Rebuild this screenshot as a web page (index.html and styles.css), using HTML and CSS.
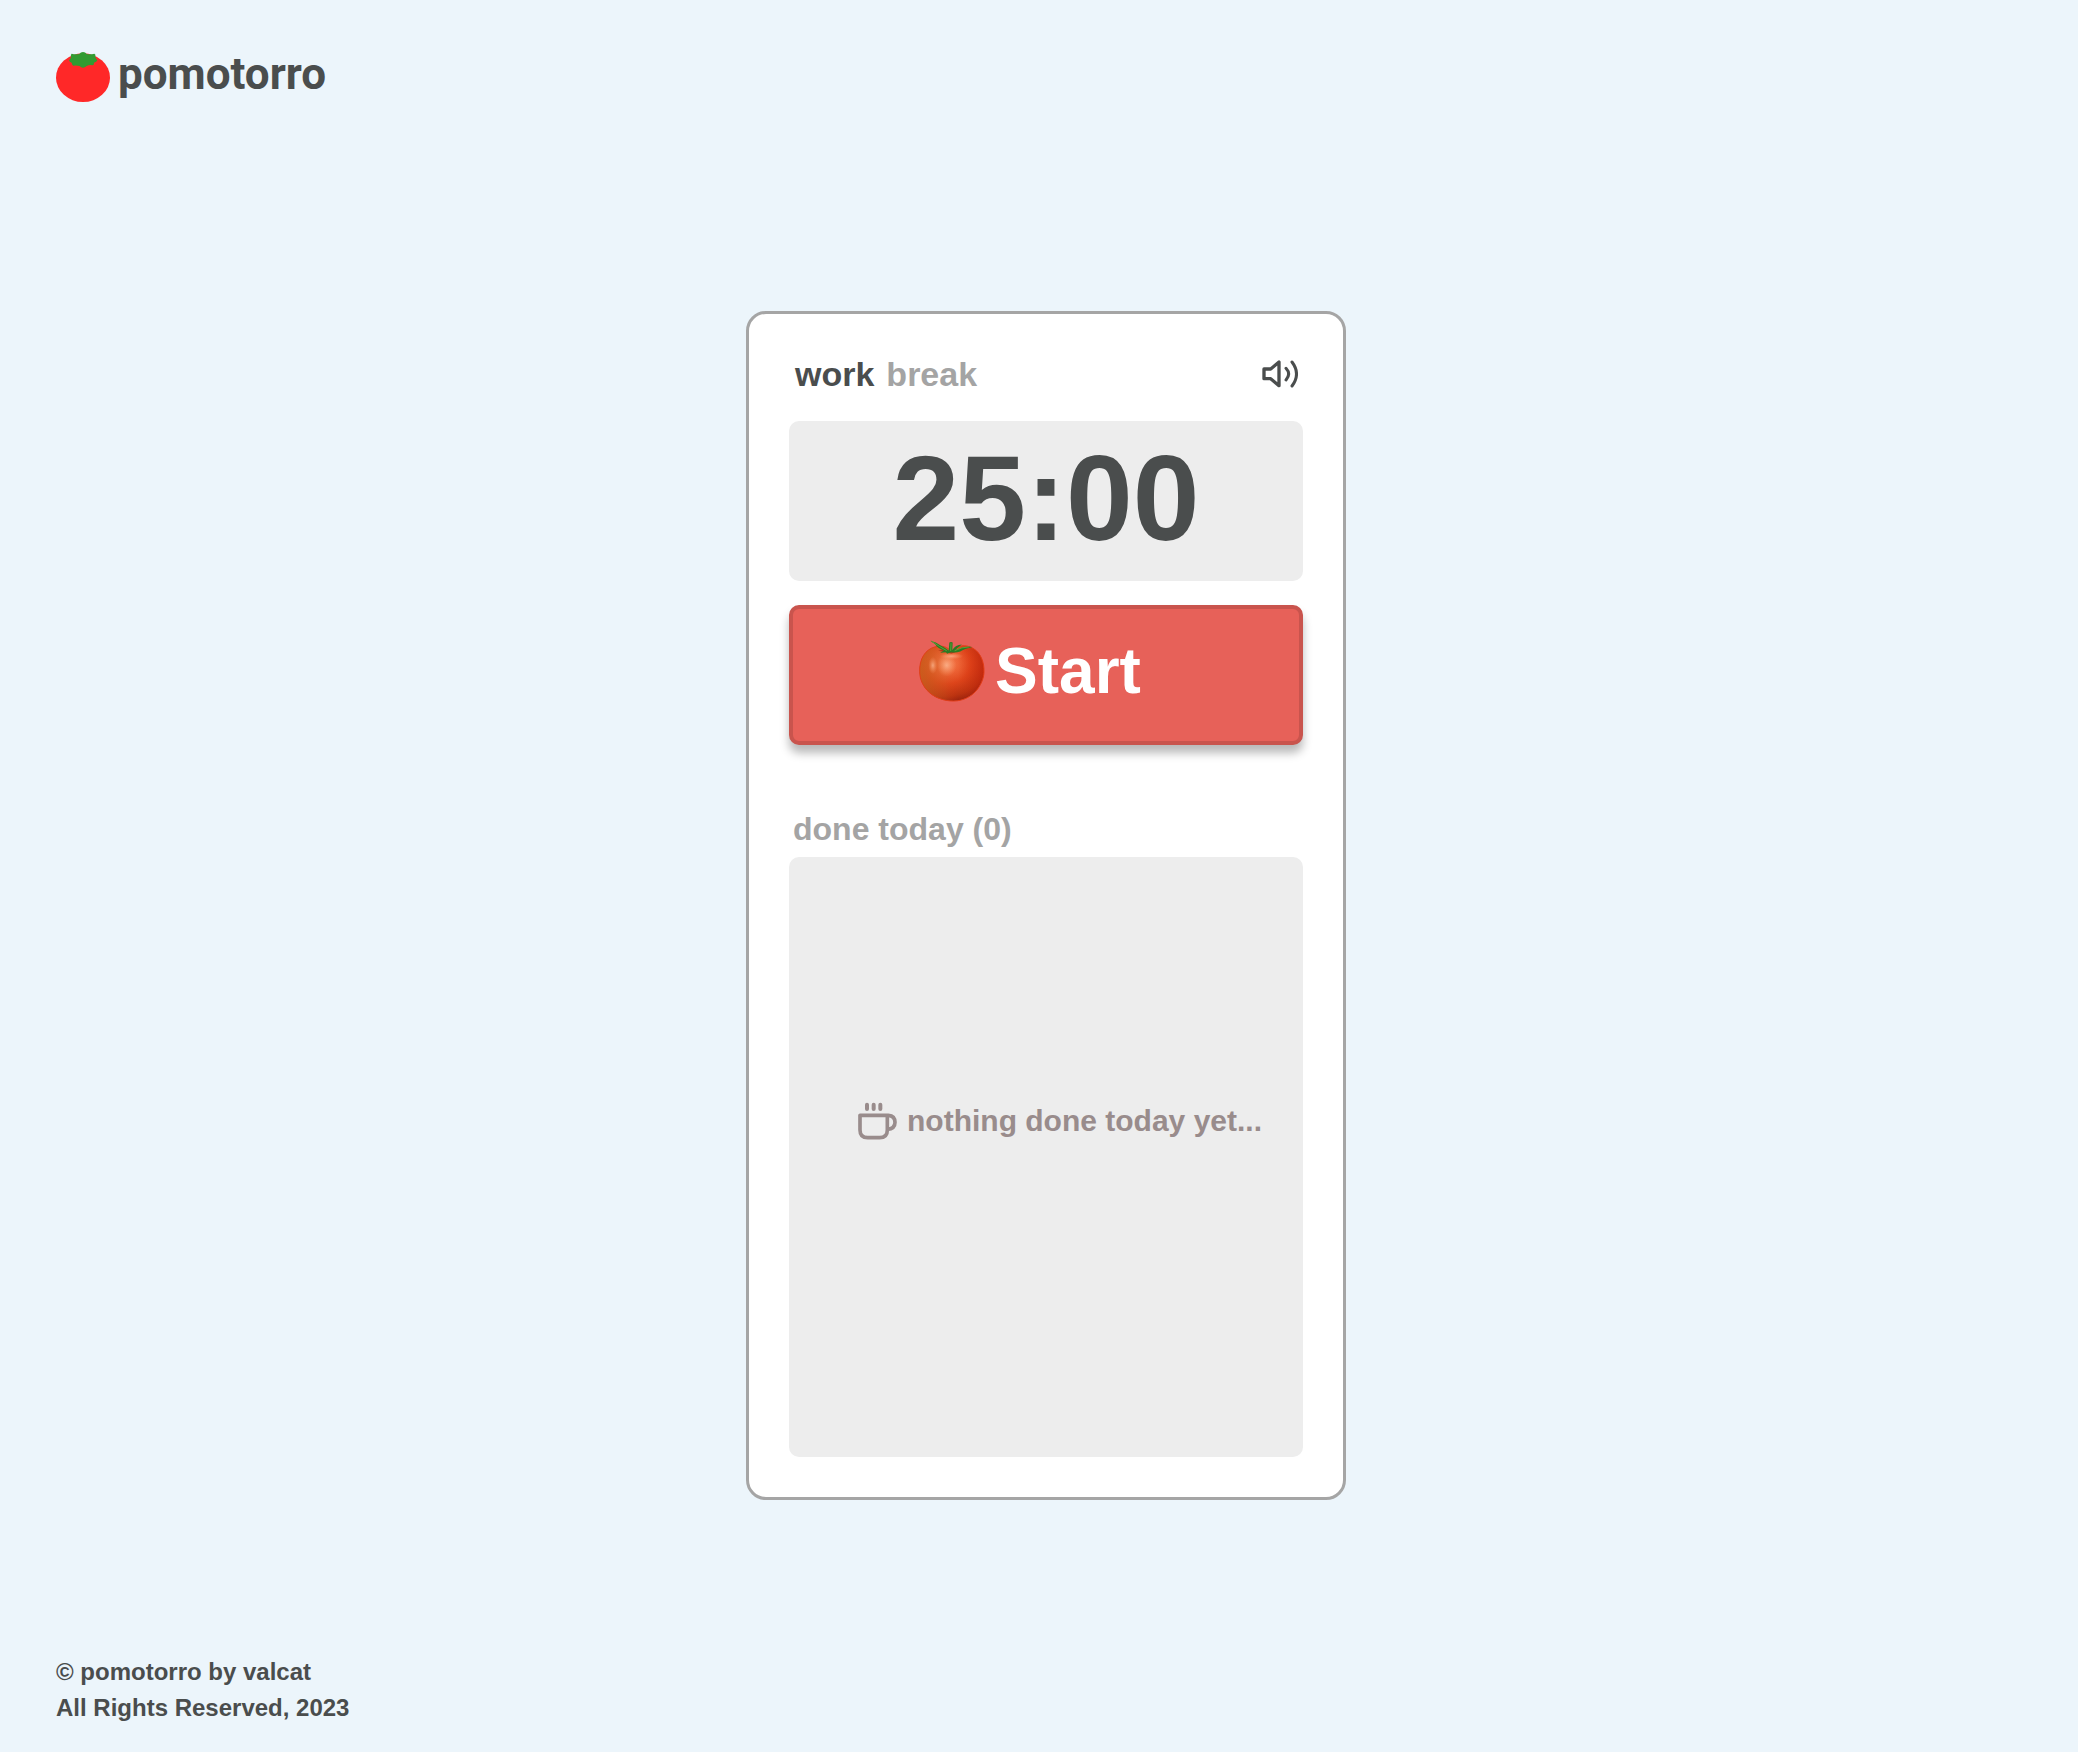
FILE: index.html
```html
<!DOCTYPE html>
<html lang="en">
<head>
<meta charset="utf-8">
<meta name="viewport" content="width=device-width, initial-scale=1">
<title>pomotorro</title>
<link rel="stylesheet" href="styles.css">
</head>
<body>
<header class="site-header">
  <a class="brand" href="#">
    <svg class="brand-mark" viewBox="0 0 162 150" aria-hidden="true">
      <ellipse cx="81" cy="77" rx="81" ry="73" fill="#ff2828"/>
      <path fill="#319b31" d="M47 5Q58 8 70 6Q74 0 81 0Q88 0 92 6Q103 8 115 5Q120 6 118 14Q120 20 124 25Q122 31 114 32Q115 38 110 40Q100 38 92 42Q86 47 81 47Q75 47 71 42Q61 39 52 41Q48 39 47 32Q40 31 39 25Q44 20 45 14Q43 8 47 5Z"/>
    </svg>
    <span class="brand-name">pomotorro</span>
  </a>
</header>
<main class="stage">
  <section class="card">
    <div class="card-top">
      <nav class="modes">
        <button type="button" class="mode mode-active">work</button>
        <button type="button" class="mode">break</button>
      </nav>
      <button type="button" class="sound" aria-label="Sound">
        <svg class="sound-icon" viewBox="0 0 108 84" fill="none" stroke="#4a4d4d" stroke-linecap="round" stroke-linejoin="round" aria-hidden="true">
          <path stroke-width="10" d="M6 27H26L51 6V77L26 56H6Z"/>
          <path stroke-width="9" d="M72 25Q88 42 72 60M90 6Q117 42 90 78"/>
        </svg>
      </button>
    </div>
    <div class="timer" role="timer">25:00</div>
    <button type="button" class="start">
      <svg class="start-icon" viewBox="0 0 200 186" aria-hidden="true">
        <defs>
          <radialGradient id="flesh" cx="0.42" cy="0.32" r="0.74">
            <stop offset="0" stop-color="#f98a5c"/>
            <stop offset="0.24" stop-color="#ee6638"/>
            <stop offset="0.5" stop-color="#dd451b"/>
            <stop offset="0.8" stop-color="#b93210"/>
            <stop offset="1" stop-color="#8d1d0d"/>
          </radialGradient>
          <linearGradient id="side" x1="0" x2="1" y1="0" y2="0">
            <stop offset="0" stop-color="#c8661f" stop-opacity="0.75"/>
            <stop offset="0.4" stop-color="#cf5c20" stop-opacity="0.25"/>
            <stop offset="0.6" stop-color="#e2330f" stop-opacity="0"/>
            <stop offset="1" stop-color="#d01c0a" stop-opacity="0.4"/>
          </linearGradient>
          <radialGradient id="glow">
            <stop offset="0" stop-color="#ffc09c" stop-opacity="0.7"/>
            <stop offset="1" stop-color="#ffa070" stop-opacity="0"/>
          </radialGradient>
        </defs>
        <path fill="url(#flesh)" d="M97 35C112 14 143 11 165 25C188 39 198 68 197 97C195 134 164 183 105 184C45 184 3 145 2 95C1 57 18 28 48 20C70 14 88 20 97 35Z"/>
        <path fill="url(#side)" stroke="#e23e17" stroke-width="3" d="M97 35C112 14 143 11 165 25C188 39 198 68 197 97C195 134 164 183 105 184C45 184 3 145 2 95C1 57 18 28 48 20C70 14 88 20 97 35Z"/>
        <path fill="#8d1f0c" opacity="0.6" d="M58 31Q75 27 96 34Q112 25 132 27Q112 35 98 41Q80 37 58 31Z"/>
        <ellipse fill="url(#glow)" cx="84" cy="76" rx="30" ry="34"/>
        <ellipse fill="url(#glow)" cx="42" cy="76" rx="14" ry="26"/>
        <ellipse fill="url(#glow)" cx="98" cy="48" rx="36" ry="10"/>
        <path fill="#2c7a24" d="M34 1Q52 4 66 16Q78 22 90 31L92 7Q97 3 102 7L101 30Q110 14 130 13Q116 22 109 32Q130 18 162 20Q137 25 125 34Q111 39 97 36L85 41L82 36L64 38L76 31Q55 23 49 12Z"/>
        <path fill="none" stroke="#5ba136" stroke-width="3" stroke-linecap="round" d="M39 3Q64 21 83 31M97 10L96 31M109 31Q130 20 151 20"/>
      </svg>
      <span>Start</span>
    </button>
    <h2 class="done-title">done today (0)</h2>
    <div class="done-list">
      <svg class="cup-icon" viewBox="0 0 117 114" fill="none" stroke="#998c8c" stroke-linecap="round" stroke-linejoin="round" aria-hidden="true">
        <path stroke-width="11" d="M6 40H88V84Q88 107 65 107H29Q6 107 6 84ZM88 40H91Q111 42 111 61Q111 81 88 82"/>
        <path stroke-width="12" d="M27 8V21M47 8V21M67 8V21"/>
      </svg>
      <p class="empty-note">nothing done today yet...</p>
    </div>
  </section>
</main>
<footer class="site-footer">
  <p>© pomotorro by valcat</p>
  <p>All Rights Reserved, 2023</p>
</footer>
</body>
</html>
```

FILE: styles.css
```css
* {
  box-sizing: border-box;
}

body {
  margin: 0;
  min-height: 100vh;
  padding: 52px 42px 26px 56px;
  display: flex;
  flex-direction: column;
  background: #ecf5fb;
  color: #4a4d4d;
  font-family: "Liberation Sans", Arial, sans-serif;
  font-weight: 700;
}

button {
  font: inherit;
  color: inherit;
  background: none;
  border: 0;
  padding: 0;
  cursor: pointer;
}

p,
h2 {
  margin: 0;
}

.site-header {
  padding-bottom: 50px;
}

.brand {
  display: inline-flex;
  align-items: flex-start;
  gap: 8px;
  color: inherit;
  text-decoration: none;
}

.brand-mark {
  width: 54px;
  height: 50px;
}

.brand-name {
  font-family: Roboto, sans-serif;
  font-size: 44px;
  line-height: 44px;
}

.stage {
  flex: 1;
  display: flex;
  align-items: center;
  justify-content: center;
}

.card {
  width: 100%;
  max-width: 600px;
  padding: 40px;
  display: flex;
  flex-direction: column;
  background: #fff;
  border: 3px solid #a5a5a5;
  border-radius: 20px;
}

.card-top {
  display: flex;
  align-items: center;
  justify-content: space-between;
  padding: 0 5px 27px 6px;
}

.modes {
  display: flex;
  gap: 12px;
}

.mode {
  font-size: 34px;
  line-height: 40px;
  color: #a4a4a4;
}

.mode-active {
  color: #4a4d4d;
}

.sound-icon {
  display: block;
  width: 36px;
  height: 28px;
}

.timer {
  height: 160px;
  border-radius: 10px;
  background: #ededed;
  font-size: 120px;
  line-height: 154px;
  text-align: center;
}

.start {
  margin-top: 24px;
  height: 140px;
  padding: 0 32px 8px 0;
  display: flex;
  align-items: center;
  justify-content: center;
  gap: 10px;
  border: 4px solid #c9544d;
  border-radius: 10px;
  background: #e76159;
  box-shadow: 0 8px 10px rgba(0, 0, 0, 0.28);
  color: #fff;
  font-size: 64px;
}

.start-icon {
  width: 66px;
  height: 62px;
}

.done-title {
  margin-top: 64px;
  padding: 0 4px 8px;
  font-size: 32px;
  line-height: 40px;
  color: #a4a4a4;
}

.done-list {
  min-height: 600px;
  padding: 0 0 72px 28px;
  display: flex;
  align-items: center;
  justify-content: center;
  gap: 10px;
  border-radius: 10px;
  background: #ededed;
  color: #998c8c;
}

.cup-icon {
  width: 39px;
  height: 38px;
}

.empty-note {
  font-size: 30px;
  line-height: 36px;
}

.site-footer {
  font-size: 24px;
  line-height: 36px;
}
```
